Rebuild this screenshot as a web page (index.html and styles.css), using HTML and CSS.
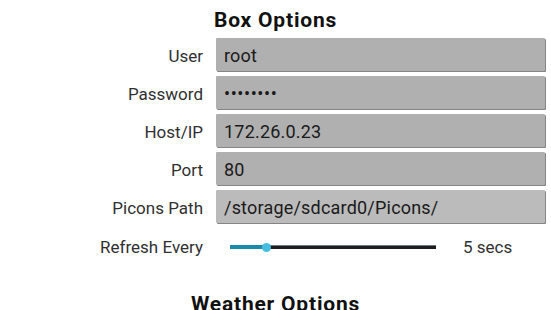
FILE: index.html
```html
<!DOCTYPE html>
<html lang="en">
<head>
    <meta charset="UTF-8">
    <meta name="viewport" content="width=device-width, initial-scale=1.0">
    <title>Settings</title>
    <link rel="stylesheet" href="styles.css">
</head>
<body>

    <div class="settings">
        <h2 class="section-title">Box Options</h2>

        <div class="form-grid">
            <label class="field-label">User</label>
            <div class="field-box">root</div>

            <label class="field-label">Password</label>
            <div class="field-box field-password">&bull;&bull;&bull;&bull;&bull;&bull;&bull;&bull;</div>

            <label class="field-label">Host/IP</label>
            <div class="field-box">172.26.0.23</div>

            <label class="field-label">Port</label>
            <div class="field-box">80</div>

            <label class="field-label">Picons Path</label>
            <div class="field-box field-light">/storage/sdcard0/Picons/</div>

            <label class="field-label slider-label">Refresh Every</label>
            <div class="slider-row">
                <div class="slider">
                    <div class="slider-fill" style="width: 36px"></div>
                    <div class="slider-thumb" style="left: 36px"></div>
                </div>
                <span class="slider-value">5 secs</span>
            </div>
        </div>

        <h2 class="section-title section-next">Weather Options</h2>
    </div>

</body>
</html>
```

FILE: styles.css
```css
body {
    margin: 0;
    background: #ffffff;
    font-family: Roboto, "Noto Sans", sans-serif;
    color: #222;
}

.settings {
    width: 551px;
}

/* Judul bagian */
.section-title {
    margin: 0;
    padding-top: 8px;
    height: 30px;
    font-size: 21px;
    font-weight: bold;
    line-height: 24px;
    letter-spacing: 0.8px;
    text-align: center;
    color: #111;
}

.section-next {
    margin-top: 18px;
}

/* Form */
.form-grid {
    display: grid;
    grid-template-columns: 203px 329px;
    column-gap: 13px;
    row-gap: 5px;
}

.field-label {
    box-sizing: border-box;
    height: 33px;
    padding-top: 4px;
    line-height: 29px;
    text-align: right;
    font-size: 17px;
    color: #303030;
}

.field-box {
    box-sizing: border-box;
    height: 33px;
    padding: 4px 0 0 8px;
    line-height: 28px;
    background: #b0b0b0;
    box-shadow: 1px 1px 0 #858585;
    border-radius: 1px;
    font-size: 18px;
    letter-spacing: 0.2px;
    color: #1a1a1a;
}

.field-password {
    letter-spacing: 0.6px;
}

.field-light {
    background: #bbbbbb;
}

/* Slider */
.slider-label {
    height: 38px;
    padding-top: 0;
    line-height: 38px;
}

.slider-row {
    display: flex;
    align-items: center;
    height: 38px;
    padding-left: 14px;
}

.slider {
    position: relative;
    width: 206px;
    height: 3px;
    background: #1c1c1c;
    border-top: 1px solid #6d7b80;
}

.slider-fill {
    position: absolute;
    left: 0;
    top: -1px;
    height: 4px;
    background: #1a8aab;
}

.slider-thumb {
    position: absolute;
    top: -3px;
    width: 9px;
    height: 9px;
    margin-left: -4px;
    border-radius: 50%;
    background: #45bde0;
}

.slider-value {
    margin-left: 27px;
    font-size: 17px;
    color: #303030;
}
```
